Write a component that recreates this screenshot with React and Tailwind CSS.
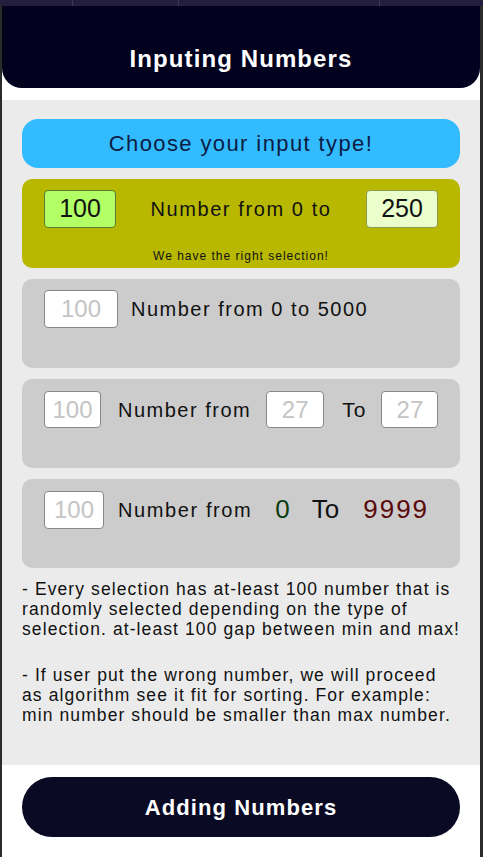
import React from "react";

const font = { fontFamily: '"Liberation Sans", Arial, sans-serif' };

function Box({ children, className }) {
  return (
    <div className={`flex shrink-0 items-center justify-center rounded-[4px] border ${className}`}>
      {children}
    </div>
  );
}

export default function App() {
  return (
    <div style={font} className="w-[483px] h-[857px] bg-[#2b2b2b] flex flex-col overflow-hidden">
      <div className="h-[6px] bg-[#221e3c] flex shrink-0">
        <div className="w-[73px] border-r border-[#3a3655]" />
        <div className="w-[106px] border-r border-[#3a3655]" />
        <div className="w-[201px] border-r border-[#3a3655]" />
        <div className="flex-1" />
      </div>
      <div className="flex-1 ml-[2px] mr-[3px] bg-white flex flex-col">
        <div className="h-[82px] bg-[#02021f] rounded-b-[20px] flex items-end justify-center pb-[17px] shrink-0">
          <span className="text-white font-bold text-[24px] tracking-[1.1px] leading-none">Inputing Numbers</span>
        </div>
        <div className="mt-[12px] h-[665px] bg-[#ebebeb] px-[20px] pt-[19px] flex flex-col">
          <div className="h-[49px] rounded-[16px] bg-[#33bbff] flex items-center justify-center">
            <span className="text-[#0b1c45] text-[22px] tracking-[1.4px]">Choose your input type!</span>
          </div>
          <div className="mt-[11px] h-[89px] rounded-[10px] bg-[#b9b800] flex flex-col px-[22px] pt-[11px]">
            <div className="flex items-center justify-between">
              <Box className="w-[72px] h-[38px] bg-[#b2ff66] border-[#5e7a2a] text-[#111] text-[25px]">100</Box>
              <span className="whitespace-nowrap text-[#111] text-[20px] tracking-[1.6px]">Number from 0 to</span>
              <Box className="w-[72px] h-[38px] bg-[#eaffcc] border-[#8c9a50] text-[#111] text-[25px]">250</Box>
            </div>
            <div className="mt-[21px] text-center text-[12px] leading-[14px] tracking-[1px] text-[#111]">We have the right selection!</div>
          </div>
          <div className="mt-[11px] h-[89px] rounded-[10px] bg-[#cccccc] px-[22px] pt-[11px]">
            <div className="flex items-center">
              <Box className="w-[74px] h-[38px] bg-white border-[#888] text-[#c4c4c4] text-[24px]">100</Box>
              <span className="ml-[13px] whitespace-nowrap text-[#111] text-[20px] tracking-[1.5px]">Number from 0 to 5000</span>
            </div>
          </div>
          <div className="mt-[11px] h-[89px] rounded-[10px] bg-[#cccccc] px-[22px] pt-[12px]">
            <div className="flex items-center">
              <Box className="w-[57px] h-[37px] bg-white border-[#888] text-[#c4c4c4] text-[24px]">100</Box>
              <span className="ml-[17px] whitespace-nowrap text-[#111] text-[20px] tracking-[1.5px]">Number from</span>
              <Box className="ml-[15px] w-[58px] h-[37px] bg-white border-[#888] text-[#c4c4c4] text-[24px]">27</Box>
              <span className="ml-[18px] text-[#111] text-[21px] tracking-[1px]">To</span>
              <Box className="ml-[15px] w-[57px] h-[37px] bg-white border-[#888] text-[#c4c4c4] text-[24px]">27</Box>
            </div>
          </div>
          <div className="mt-[11px] h-[89px] rounded-[10px] bg-[#cccccc] px-[22px] pt-[11px]">
            <div className="flex items-center">
              <Box className="w-[60px] h-[38px] bg-white border-[#888] text-[#c4c4c4] text-[24px]">100</Box>
              <span className="ml-[14px] whitespace-nowrap text-[#111] text-[20px] tracking-[1.6px]">Number from</span>
              <span className="ml-[23px] text-[#0d3b0d] text-[26px]">0</span>
              <span className="ml-[22px] text-[#111] text-[26px]">To</span>
              <span className="ml-[24px] text-[#5a0a0a] text-[26px] tracking-[2px]">9999</span>
            </div>
          </div>
          <div className="mt-[11px] mr-[-10px] whitespace-nowrap text-[#111] text-[17.5px] leading-[20px] tracking-[1.1px]">
            <p>
              - Every selection has at-least 100 number that is<br />
              randomly selected depending on the type of<br />
              selection. at-least 100 gap between min and max!
            </p>
            <p className="mt-[26px]">
              - If user put the wrong number, we will proceed<br />
              as algorithm see it fit for sorting. For example:<br />
              min number should be smaller than max number.
            </p>
          </div>
        </div>
        <div className="flex-1 bg-white px-[20px] pt-[12px]">
          <div className="h-[60px] rounded-full bg-[#0a0a24] flex items-center justify-center">
            <span className="text-white font-bold text-[22px] tracking-[1.1px]">Adding Numbers</span>
          </div>
        </div>
      </div>
    </div>
  );
}
